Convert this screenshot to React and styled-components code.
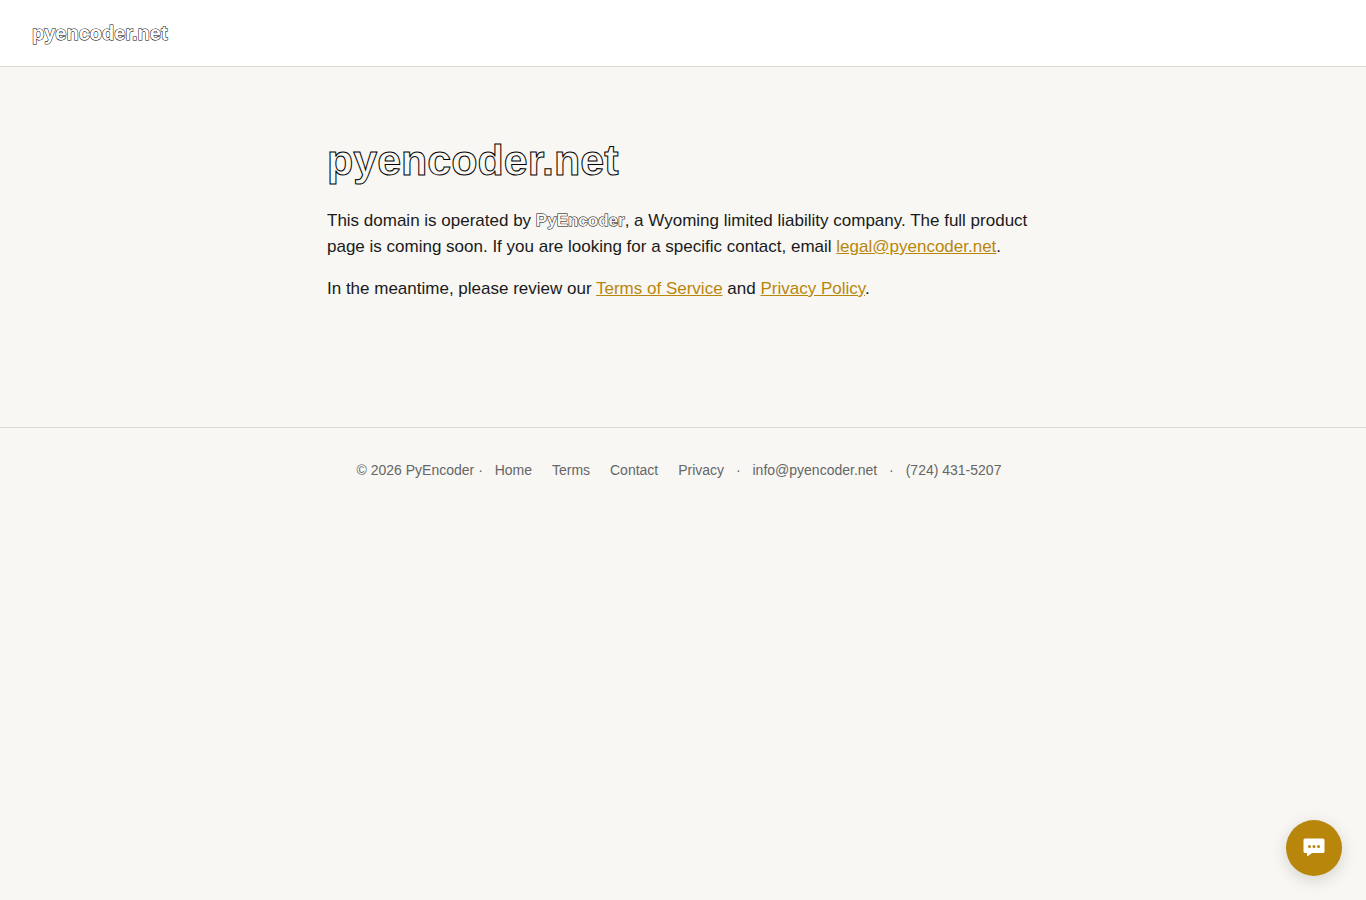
import React from "react"
import styled, { createGlobalStyle, css } from "styled-components"

const GlobalStyle = createGlobalStyle`
  * {
    box-sizing: border-box;
  }
  body {
    margin: 0;
    background: #f8f7f4;
    color: #1a1a1a;
    font-family: "Liberation Sans", Helvetica, Arial, sans-serif;
    font-size: 17px;
    line-height: 26px;
  }
`

const outlined = css`
  color: #f8f7f4;
  font-weight: 700;
  -webkit-text-stroke: 1px #000;
`

const Header = styled.header`
  padding: 20px 32px;
  background: #fff;
  border-bottom: 1px solid #dddad2;
`

const Brand = styled.a`
  ${outlined}
  display: block;
  width: fit-content;
  color: #fff;
  font-size: 20px;
  paint-order: stroke fill;
  text-decoration: none;
`

const Main = styled.main`
  max-width: 760px;
  margin: 0 auto;
  padding: 65px 24px 109px;

  p {
    margin: 0 0 16px;
  }
  p a {
    color: #b8860b;
  }
`

const Title = styled.h1`
  ${outlined}
  margin: 0 0 20px;
  color: transparent;
  font-size: 43px;
  line-height: 56px;
`

const Strong = styled.strong`
  ${outlined}
  paint-order: stroke fill;
`

const Footer = styled.footer`
  padding: 32px 24px;
  border-top: 1px solid #dddad2;
  color: #666;
  font-size: 14px;
  line-height: 20px;
  text-align: center;

  a {
    margin: 0 8px;
    color: inherit;
    text-decoration: none;
  }
`

const ChatButton = styled.button`
  position: fixed;
  right: 24px;
  bottom: 24px;
  display: flex;
  align-items: center;
  justify-content: center;
  width: 56px;
  height: 56px;
  padding: 0;
  border: 0;
  border-radius: 50%;
  background: #b8860b;
  color: #fff;
  box-shadow: 0 4px 16px rgba(0, 0, 0, 0.15);
  cursor: pointer;
`

const App = () => (
  <>
    <GlobalStyle />
    <Header>
      <Brand href="/">pyencoder.net</Brand>
    </Header>
    <Main>
      <Title>pyencoder.net</Title>
      <p>
        This domain is operated by <Strong>PyEncoder</Strong>, a Wyoming limited
        liability company. The full product page is coming soon. If you are
        looking for a specific contact, email{" "}
        <a href="mailto:legal@pyencoder.net">legal@pyencoder.net</a>.
      </p>
      <p>
        In the meantime, please review our <a href="/terms">Terms of Service</a>{" "}
        and <a href="/privacy">Privacy Policy</a>.
      </p>
    </Main>
    <Footer>
      © 2026 PyEncoder · <a href="/">Home</a> <a href="/terms">Terms</a>{" "}
      <a href="/contact">Contact</a> <a href="/privacy">Privacy</a> ·{" "}
      <a href="mailto:info@pyencoder.net">info@pyencoder.net</a> ·{" "}
      <a href="tel:+17244315207">(724) 431-5207</a>
    </Footer>
    <ChatButton type="button" aria-label="Open chat">
      <svg width="28" height="28" viewBox="0 0 28 28" fill="none">
        <path
          d="M5 4.5h18a1.5 1.5 0 0 1 1.5 1.5v11.500a1.500 1.500 0 0 1-1.500 1.500H12l-4 3c-.5.4-1 .1-1-.5V19H5a1.500 1.500 0 0 1-1.500-1.500V6A1.500 1.500 0 0 1 5 4.500z"
          fill="currentColor"
        />
        <circle cx="9.5" cy="12.4" r="1.5" fill="#b8860b" />
        <circle cx="14" cy="12.4" r="1.5" fill="#b8860b" />
        <circle cx="18.5" cy="12.4" r="1.5" fill="#b8860b" />
      </svg>
    </ChatButton>
  </>
)

export default App
